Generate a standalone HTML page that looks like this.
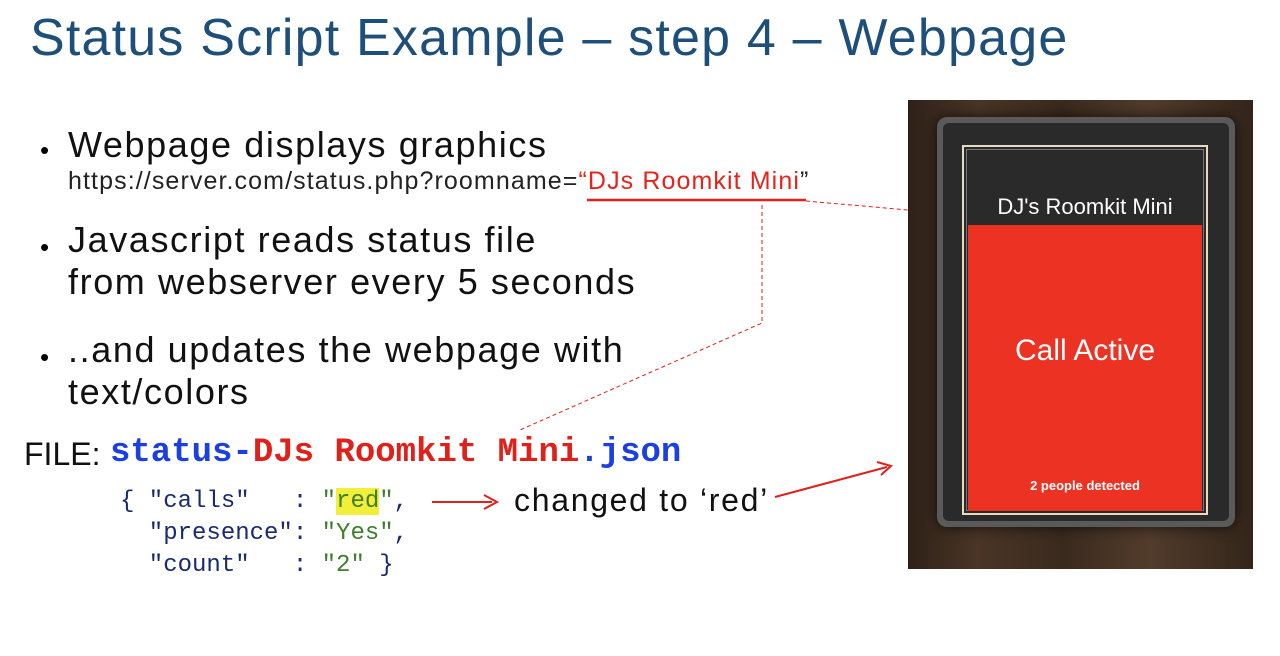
<!DOCTYPE html>
<html><head><meta charset="utf-8"><style>
body{margin:0;width:1280px;height:656px;background:#fff;position:relative;overflow:hidden;font-family:"Liberation Sans",sans-serif;}
.a{position:absolute;white-space:nowrap;}
.title{left:30px;top:8px;font-size:52px;color:#1d4f7a;letter-spacing:1.2px;}
.b{font-size:36px;color:#111;letter-spacing:1.6px;}
.dot{font-size:26px;}
.mono{font-family:"Liberation Mono",monospace;}
</style></head><body>
<div class="a title">Status Script Example – step 4 – Webpage</div>

<div class="a dot" style="left:40px;top:135px">•</div>
<div class="a b" style="left:68px;top:124px">Webpage displays graphics</div>
<div class="a" style="left:68px;top:167px;font-size:25px;letter-spacing:1.1px;color:#222">https://server.com/status.php?roomname=<span style="color:#e8231b">“DJs Roomkit Mini</span>”</div>

<div class="a dot" style="left:40px;top:232px">•</div>
<div class="a b" style="left:68px;top:219px;line-height:42px">Javascript reads status file<br>from webserver every 5 seconds</div>

<div class="a dot" style="left:40px;top:342px">•</div>
<div class="a b" style="left:68px;top:329px;line-height:42px">..and updates the webpage with<br>text/colors</div>

<div class="a" style="left:24px;top:436px;font-size:32px;color:#111">FILE:</div>
<div class="a mono" style="left:110px;top:434px;font-size:34px;font-weight:bold;color:#1c3fe0">status-<span style="color:#e0201a">DJs Roomkit Mini</span>.json</div>

<div class="a mono" style="left:120px;top:486px;font-size:24px;line-height:32px;color:#1a2a70;white-space:pre">{ "calls"   : <span style="color:#3d7f2a">"<span style="background:#f2ef3a">red</span>"</span>,
  "presence": <span style="color:#3d7f2a">"Yes"</span>,
  "count"   : <span style="color:#3d7f2a">"2"</span> }</div>
<div class="a" style="left:514px;top:482px;font-size:32px;letter-spacing:1.7px;color:#111">changed to ‘red’</div>

<svg class="a" style="left:0;top:0" width="1280" height="656">
<line x1="587" y1="200" x2="806" y2="200" stroke="#e0201a" stroke-width="2.5"/>
<line x1="806" y1="201" x2="908" y2="210" stroke="#e0201a" stroke-width="1" stroke-dasharray="4,3"/>
<polyline points="762,205 762,323 520,430" fill="none" stroke="#e0201a" stroke-width="1" stroke-dasharray="4,3"/>
<line x1="432" y1="502" x2="492" y2="502" stroke="#e0201a" stroke-width="2"/>
<polyline points="484,495 497,502 484,509" fill="none" stroke="#e0201a" stroke-width="2"/>
<line x1="775" y1="497" x2="887" y2="467" stroke="#e0201a" stroke-width="2"/>
<polyline points="877,462 891,466 881,475" fill="none" stroke="#e0201a" stroke-width="2"/>
</svg>

<div class="a" style="left:908px;top:100px;width:345px;height:469px;background:linear-gradient(90deg,#2e2118,#4a3526 20%,#3a2a1e 45%,#523c2c 70%,#33251a);"></div>
<div class="a" style="left:937px;top:117px;width:298px;height:410px;background:#5a5a5a;border-radius:10px;box-shadow:0 0 14px rgba(0,0,0,.7)"></div>
<div class="a" style="left:943px;top:123px;width:286px;height:398px;background:#2a2a2a;border-radius:6px"></div>
<div class="a" style="left:962px;top:145px;width:246px;height:370px;border:2px solid #e8dcc0;box-sizing:border-box"></div>
<div class="a" style="left:966px;top:149px;width:238px;height:362px;border:1px solid #777;box-sizing:border-box"></div>
<div class="a" style="left:968px;top:225px;width:234px;height:286px;background:#eb3223"></div>
<div class="a" style="left:968px;top:194px;width:234px;text-align:center;font-size:22px;color:#fff">DJ's Roomkit Mini</div>
<div class="a" style="left:968px;top:334px;width:234px;text-align:center;font-size:30px;color:#fff">Call Active</div>
<div class="a" style="left:968px;top:478px;width:234px;text-align:center;font-size:13px;font-weight:bold;color:#fff">2 people detected</div>
</body></html>
